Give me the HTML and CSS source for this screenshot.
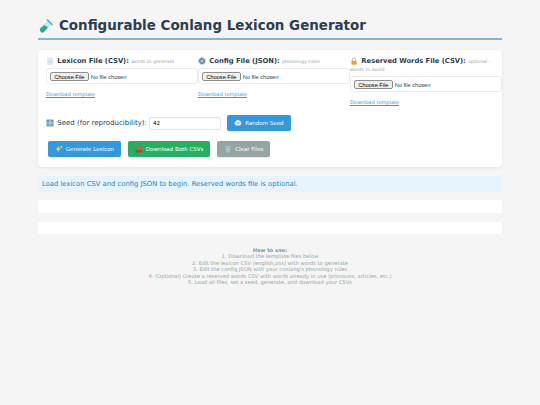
FILE: index.html
```html
<!DOCTYPE html>
<html lang="en">
<head>
  <meta charset="UTF-8" />
  <meta name="viewport" content="width=device-width, initial-scale=1.0"/>
  <title>Configurable Conlang Lexicon Generator</title>
  <link rel="stylesheet" href="styles.css">
</head>
<body>

  <h1 class="title">
    <svg class="title-icon" viewBox="0 0 16 16">
      <path d="M10 2 L14 6 L6 14 Q4 15.5 2.5 13.5 Q1 12 2.5 10 Z" fill="#cfe6ec"/>
      <path d="M6.5 7 L10 9.5 L6 14 Q4 15.5 2.5 13.5 Q1 12 2.5 10 Z" fill="#1fae93"/>
      <path d="M9 1.5 L14.5 7" stroke="#5aa7d6" stroke-width="1.6"/>
    </svg>
    Configurable Conlang Lexicon Generator
  </h1>

  <div class="panel">
    <div class="file-row">
      <div class="file-col">
        <label class="file-label">
          <svg class="icon" viewBox="0 0 10 10">
            <path d="M2 0.5 H6.5 L8.5 2.5 V9.5 H2 Z" fill="#e6eef5" stroke="#c5d3df" stroke-width="0.5"/>
            <path d="M3 4 H7.5 M3 5.5 H7.5 M3 7 H7.5" stroke="#a9bccb" stroke-width="0.5"/>
          </svg>
          Lexicon File (CSV): <small>words to generate</small>
        </label>
        <div class="file-box"><input type="file"></div>
        <a class="template" href="#">Download template</a>
      </div>
      <div class="file-col">
        <label class="file-label">
          <svg class="icon" viewBox="0 0 10 10">
            <circle cx="5" cy="5" r="3" fill="#9fb9c9" stroke="#5f8ba6" stroke-width="1.5"/>
            <circle cx="5" cy="5" r="4.2" fill="none" stroke="#5f8ba6" stroke-width="1.1" stroke-dasharray="1.3 1.3"/>
          </svg>
          Config File (JSON): <small>phonology rules</small>
        </label>
        <div class="file-box"><input type="file"></div>
        <a class="template" href="#">Download template</a>
      </div>
      <div class="file-col">
        <label class="file-label">
          <svg class="icon" viewBox="0 0 10 10">
            <path d="M3 5 V3.2 a2 2 0 0 1 4 0 V5" fill="none" stroke="#9aa4ab" stroke-width="0.9"/>
            <rect x="1.8" y="4.6" width="6.4" height="5" rx="0.8" fill="#e8a91e"/>
          </svg>
          Reserved Words File (CSV): <small>optional -</small> <small>words to avoid</small>
        </label>
        <div class="file-box"><input type="file"></div>
        <a class="template" href="#">Download template</a>
      </div>
    </div>

    <div class="seed-row">
      <label class="seed-label">
        <svg class="icon" viewBox="0 0 10 10">
          <rect x="0.5" y="0.5" width="9" height="9" rx="1" fill="#6f9fc0"/>
          <path d="M5 1 V9 M1 5 H9" stroke="#e6f0f6" stroke-width="0.8"/>
        </svg>
        Seed (for reproducibility):
      </label>
      <input class="seed-input" type="number" value="42">
      <button class="btn btn-blue">
        <svg class="icon-sm" viewBox="0 0 10 10">
          <path d="M5 1 L9 3 V7 L5 9 L1 7 V3 Z" fill="#e9edf0"/>
          <path d="M1 3 L5 5 L9 3 M5 5 V9" stroke="#7f8d96" stroke-width="0.6" fill="none"/>
        </svg>
        Random Seed
      </button>
    </div>

    <div class="action-row">
      <button class="btn btn-blue">
        <svg class="icon-sm" viewBox="0 0 10 10">
          <path d="M4 1 L5 4 L8 5 L5 6 L4 9 L3 6 L0.5 5 L3 4 Z" fill="#f5d76e"/>
          <path d="M8 0.5 L8.6 2 L10 2.5 L8.6 3 L8 4.5 L7.4 3 L6 2.5 L7.4 2 Z" fill="#f5d76e"/>
        </svg>
        Generate Lexicon
      </button>
      <button class="btn btn-green">
        <svg class="icon-sm" viewBox="0 0 10 10">
          <path d="M0.5 6 H9.5 V9.5 H0.5 Z" fill="#8d5a34"/>
          <path d="M3.5 0.5 H6.5 V4 H8 L5 7 L2 4 H3.5 Z" fill="#d9573f"/>
        </svg>
        Download Both CSVs
      </button>
      <button class="btn btn-gray">
        <svg class="icon-sm" viewBox="0 0 10 10">
          <path d="M2 3 H8 L7.3 9.5 H2.7 Z" fill="#a9c0cf"/>
          <path d="M1.5 2 H8.5" stroke="#bcd0dc" stroke-width="0.9"/>
        </svg>
        Clear Files
      </button>
    </div>
  </div>

  <div class="status">Load lexicon CSV and config JSON to begin. Reserved words file is optional.</div>

  <div class="empty-panel"></div>
  <div class="empty-panel"></div>

  <div class="how-to">
    <strong>How to use:</strong><br>
    1. Download the template files below<br>
    2. Edit the lexicon CSV (english,pos) with words to generate<br>
    3. Edit the config JSON with your conlang's phonology rules<br>
    4. (Optional) Create a reserved words CSV with words already in use (pronouns, articles, etc.)<br>
    5. Load all files, set a seed, generate, and download your CSVs
  </div>

</body>
</html>
```

FILE: styles.css
```css
* {
  box-sizing: border-box;
}

body {
  margin: 0;
  padding: 16px 38px 0;
  background-color: #f5f5f5;
  color: #2c3e50;
  font-family: 'DejaVu Sans', sans-serif;
}

.title {
  display: flex;
  align-items: center;
  gap: 5px;
  margin: 0 0 10px;
  padding-bottom: 3px;
  height: 24px;
  border-bottom: 2px solid #7fb6dc;
  font-size: 13.45px;
  line-height: 19px;
  color: #2c3e50;
}

.title-icon {
  width: 16px;
  height: 16px;
}

.icon {
  width: 8px;
  height: 8px;
  vertical-align: -1.7px;
  margin-right: 1px;
}

.icon-sm {
  width: 8px;
  height: 8px;
  vertical-align: -2px;
  margin-right: 1px;
}

.panel {
  background: white;
  border-radius: 4px;
  padding: 8px;
  height: 117px;
  box-shadow: 0 1px 3px rgba(0, 0, 0, 0.08);
}

.file-row {
  display: flex;
  height: 50px;
}

.file-col {
  width: 152px;
  flex-shrink: 0;
}

.file-label {
  display: block;
  font-size: 6.75px;
  font-weight: bold;
  line-height: 8px;
  margin-top: -1px;
  padding-bottom: 3px;
}

.file-label small {
  font-size: 4.7px;
  line-height: 0;
  font-weight: normal;
  color: #95a5a6;
}

.file-box {
  height: 16px;
  padding: 0 3px;
  display: flex;
  align-items: center;
  border: 1px solid #ececec;
  border-radius: 3px;
  background: white;
}

.file-box input {
  font-family: 'Liberation Sans', sans-serif;
  font-size: 5.6px;
  width: 100%;
}

.file-box input::file-selector-button {
  padding: 1px 3.5px;
  margin-right: 2px;
  height: 9.5px;
  border: 1px solid #8f8f8f;
  border-radius: 2px;
  background: #efefef;
  font-size: 5.6px;
}

.template {
  display: block;
  margin-top: 6.5px;
  font-size: 5px;
  line-height: 7px;
  color: #3498db;
}

.seed-row {
  display: flex;
  align-items: center;
  margin-top: 7px;
  height: 16px;
}

.seed-label {
  font-size: 7px;
  white-space: nowrap;
  width: 103px;
  flex-shrink: 0;
}

.seed-input {
  width: 72px;
  height: 13px;
  padding: 0 3px;
  margin-right: 6px;
  border: 1px solid #e4e4e4;
  border-radius: 2px;
  font-family: 'DejaVu Sans', sans-serif;
  font-size: 5.6px;
  appearance: textfield;
}

.action-row {
  display: flex;
  gap: 7px;
  margin: 10px 0 0 2px;
}

.btn {
  height: 16px;
  padding: 0 7px;
  border: none;
  border-radius: 2px;
  color: white;
  font-family: 'DejaVu Sans', sans-serif;
  font-size: 5.5px;
  white-space: nowrap;
  box-shadow: 0 1px 2px rgba(0, 0, 0, 0.1);
}

.seed-row .btn {
  width: 64px;
  padding: 0;
}

.btn-blue {
  background-color: #3498db;
}

.btn-green {
  background-color: #27ae60;
}

.btn-gray {
  background-color: #95a5a6;
}

.status {
  margin-top: 9px;
  height: 16px;
  padding: 0 4px;
  background: #e8f4fd;
  border-radius: 2px;
  color: #2980b9;
  font-size: 6.8px;
  line-height: 16px;
}

.empty-panel {
  margin-top: 8px;
  height: 13px;
  background: white;
  border-radius: 2px;
}

.empty-panel + .empty-panel {
  margin-top: 9px;
  height: 12px;
}

.how-to {
  margin-top: 13px;
  text-align: center;
  color: #95a5a6;
  font-size: 5.2px;
  line-height: 6.4px;
}

.how-to strong {
  color: #8b9697;
}
```
